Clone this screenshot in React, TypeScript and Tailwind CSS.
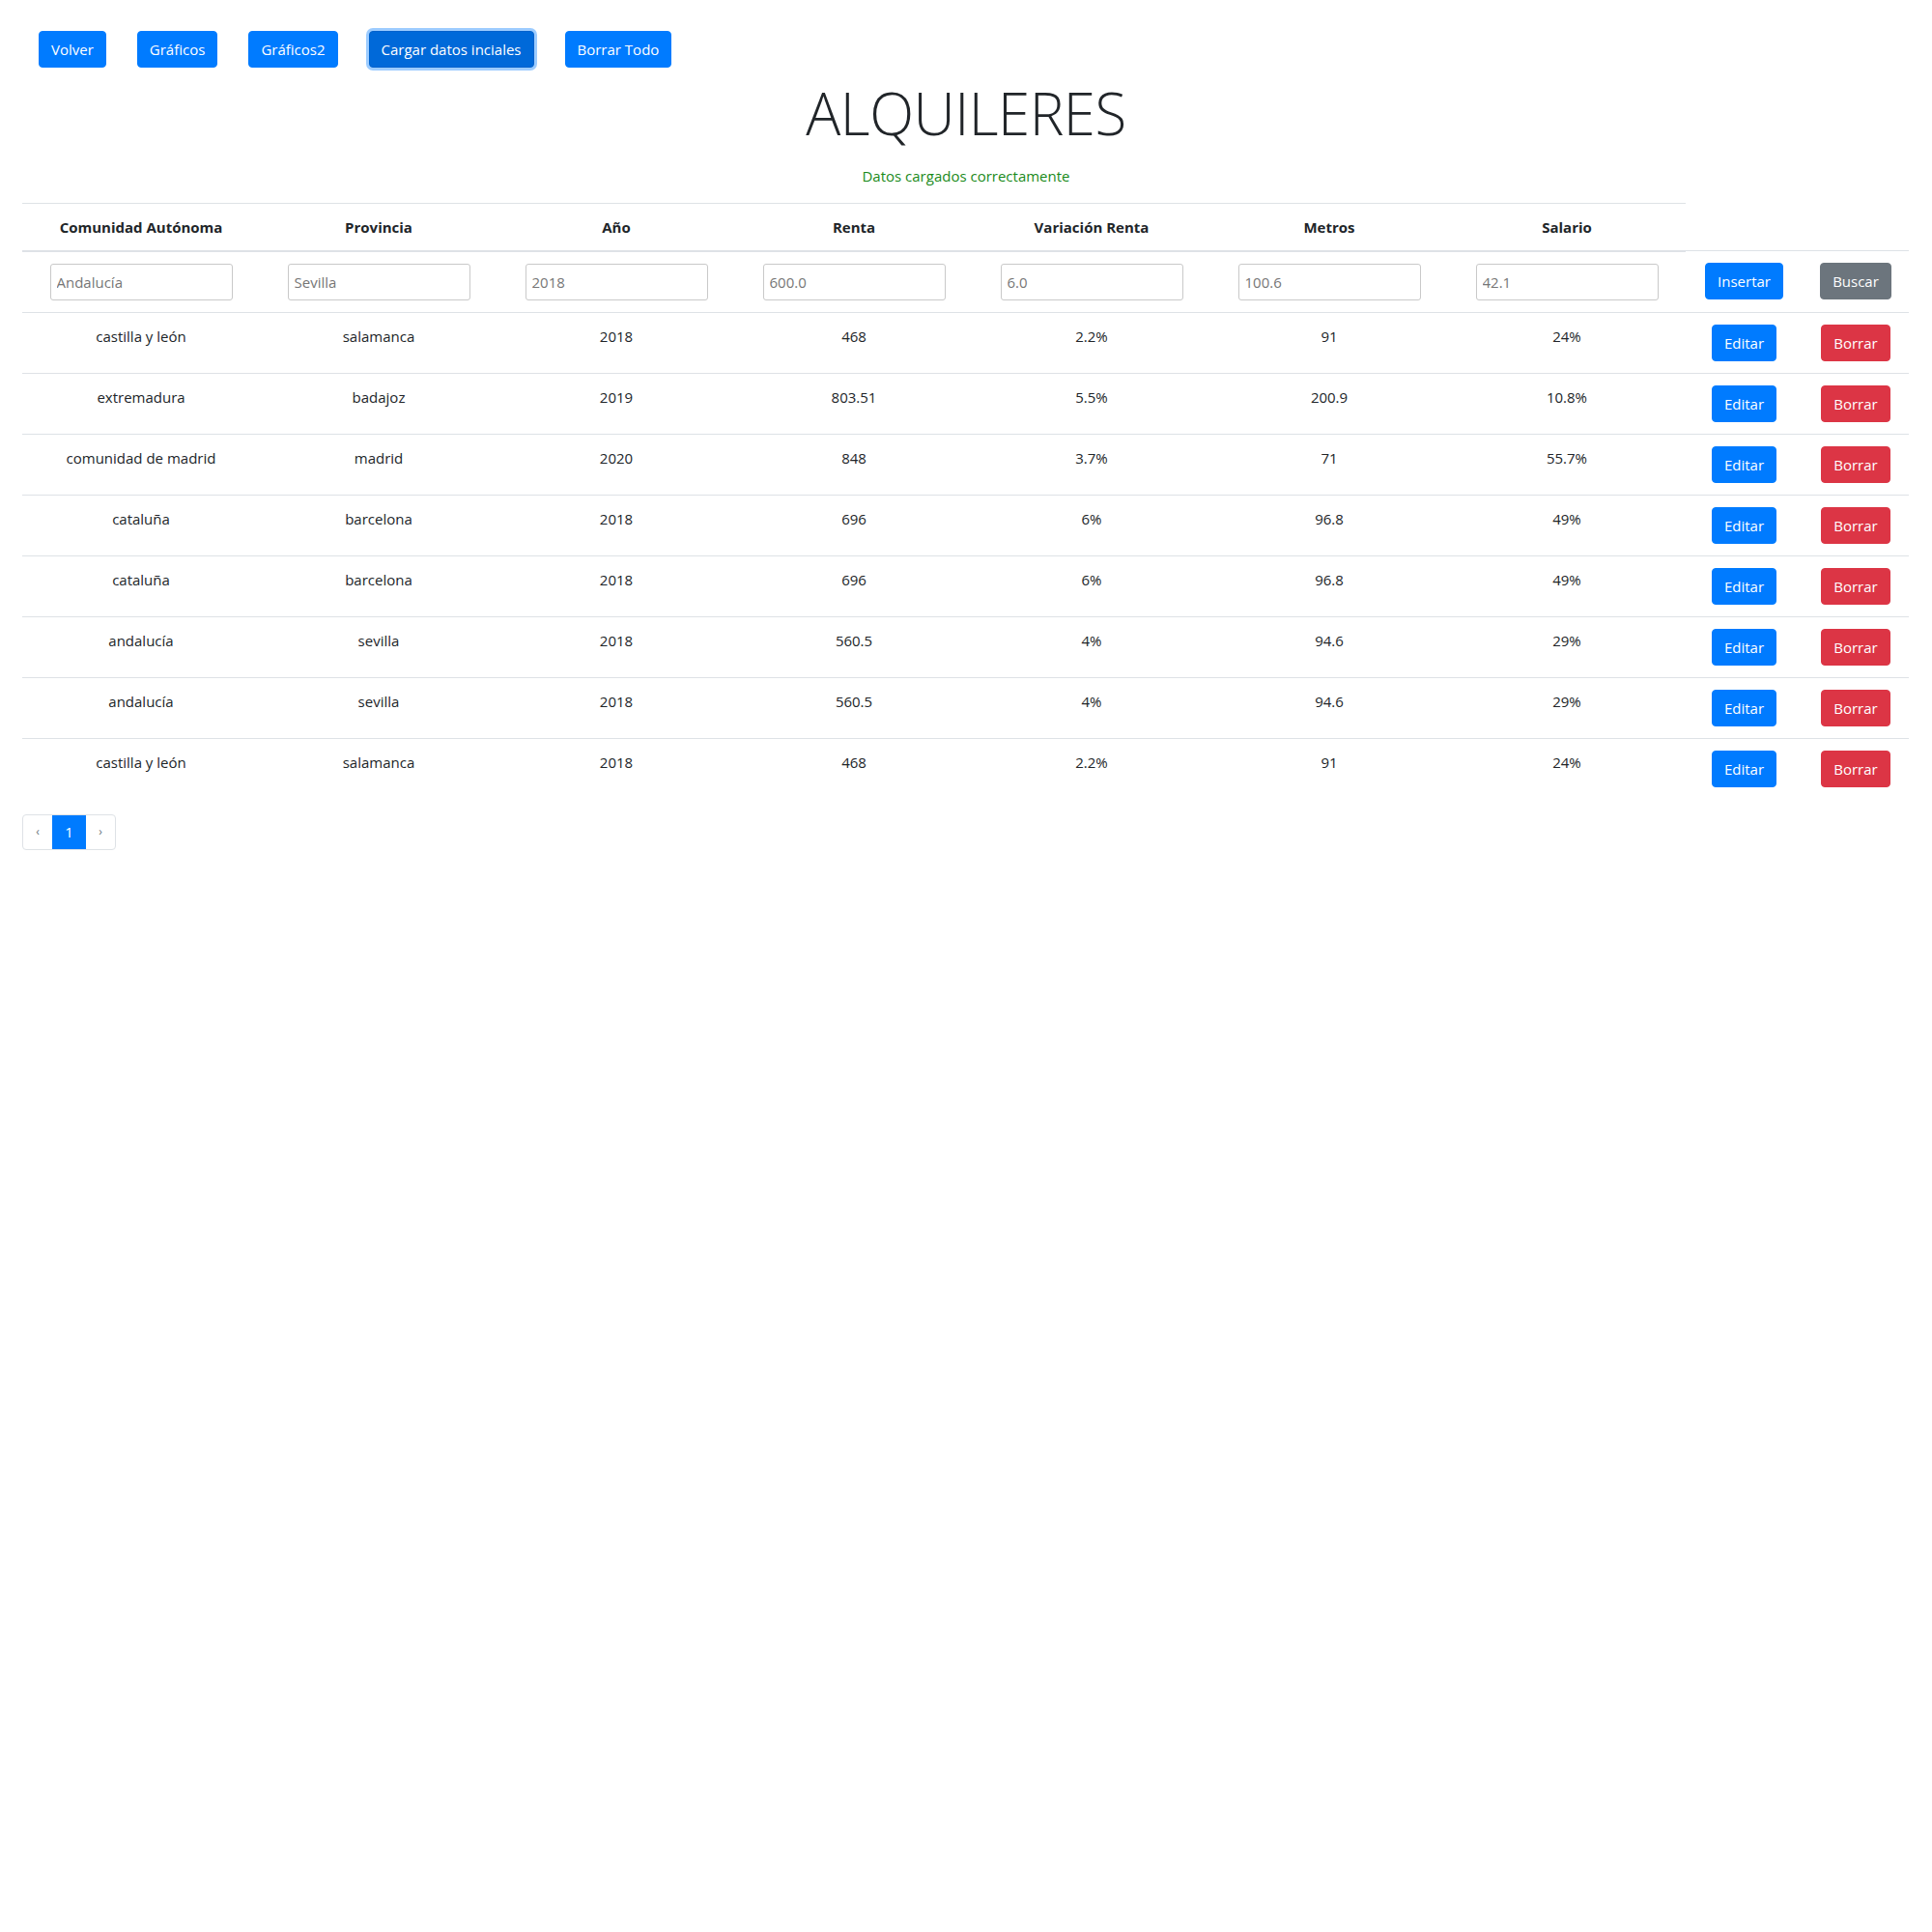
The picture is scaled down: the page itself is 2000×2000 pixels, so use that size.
import React from 'react';

const rows = [
  ['castilla y león', 'salamanca', '2018', '468', '2.2%', '91', '24%'],
  ['extremadura', 'badajoz', '2019', '803.51', '5.5%', '200.9', '10.8%'],
  ['comunidad de madrid', 'madrid', '2020', '848', '3.7%', '71', '55.7%'],
  ['cataluña', 'barcelona', '2018', '696', '6%', '96.8', '49%'],
  ['cataluña', 'barcelona', '2018', '696', '6%', '96.8', '49%'],
  ['andalucía', 'sevilla', '2018', '560.5', '4%', '94.6', '29%'],
  ['andalucía', 'sevilla', '2018', '560.5', '4%', '94.6', '29%'],
  ['castilla y león', 'salamanca', '2018', '468', '2.2%', '91', '24%'],
];

const headers = ['Comunidad Autónoma', 'Provincia', 'Año', 'Renta', 'Variación Renta', 'Metros', 'Salario'];
const placeholders = ['Andalucía', 'Sevilla', '2018', '600.0', '6.0', '100.6', '42.1'];

const btn = 'h-[38px] px-3 rounded-[4px] text-white text-[15px] leading-6 border';

export default function App() {
  return (
    <div className="min-h-screen bg-white px-[23px] pt-[32px] text-[#212529] font-['Open_Sans',sans-serif] text-[15px]">
      <div className="flex gap-[32px] ml-[17px]">
        <button className={`${btn} bg-[#007bff] border-[#007bff]`}>Volver</button>
        <button className={`${btn} bg-[#007bff] border-[#007bff]`}>Gráficos</button>
        <button className={`${btn} bg-[#007bff] border-[#007bff]`}>Gráficos2</button>
        <button className={`${btn} bg-[#0069d9] border-[#0062cc] shadow-[0_0_0_3px_rgba(38,143,255,0.45)]`}>
          Cargar datos inciales
        </button>
        <button className={`${btn} bg-[#007bff] border-[#007bff]`}>Borrar Todo</button>
      </div>

      <h1 className="text-center text-[60px] font-light leading-[1.2] mt-[11px] tracking-[-0.5px]">ALQUILERES</h1>
      <p className="text-center text-[#1a8a1a] mt-[18px] mb-[16px]">Datos cargados correctamente</p>

      <table className="border-collapse">
        <colgroup>
          {headers.map((h) => (
            <col key={h} className="w-[246px]" />
          ))}
          <col className="w-[121px]" />
          <col className="w-[110px]" />
        </colgroup>
        <thead>
          <tr>
            {headers.map((h) => (
              <th key={h} className="p-3 font-bold text-center border-t border-b-2 border-[#dee2e6] leading-6">
                {h}
              </th>
            ))}
          </tr>
        </thead>
        <tbody>
          <tr>
            {placeholders.map((p) => (
              <td key={p} className="p-3 text-center border-t border-[#dee2e6] align-top">
                <input
                  placeholder={p}
                  className="w-[189px] h-[38px] border border-[#c9c9c9] rounded-[3px] px-[6px] text-[15px] placeholder:text-[#767676] outline-none"
                />
              </td>
            ))}
            <td className="p-3 text-center border-t border-[#dee2e6] align-top">
              <button className={`${btn} bg-[#007bff] border-[#007bff]`}>Insertar</button>
            </td>
            <td className="p-3 text-center border-t border-[#dee2e6] align-top">
              <button className={`${btn} bg-[#6c757d] border-[#6c757d]`}>Buscar</button>
            </td>
          </tr>
          {rows.map((r, i) => (
            <tr key={i}>
              {r.map((c, j) => (
                <td key={j} className="p-3 text-center align-top border-t border-[#dee2e6] leading-6">
                  {c}
                </td>
              ))}
              <td className="p-3 text-center align-top border-t border-[#dee2e6]">
                <button className={`${btn} bg-[#007bff] border-[#007bff]`}>Editar</button>
              </td>
              <td className="p-3 text-center align-top border-t border-[#dee2e6]">
                <button className={`${btn} bg-[#dc3545] border-[#dc3545]`}>Borrar</button>
              </td>
            </tr>
          ))}
        </tbody>
      </table>

      <ul className="flex mt-[16px] w-fit border border-[#dee2e6] rounded-[4px] overflow-hidden h-[37px]">
        <li className="w-[30px] flex items-center justify-center text-[12px] text-[#6c757d]">‹</li>
        <li className="w-[35px] flex items-center justify-center bg-[#007bff] text-white">1</li>
        <li className="w-[30px] flex items-center justify-center text-[12px] text-[#6c757d]">›</li>
      </ul>
    </div>
  );
}
